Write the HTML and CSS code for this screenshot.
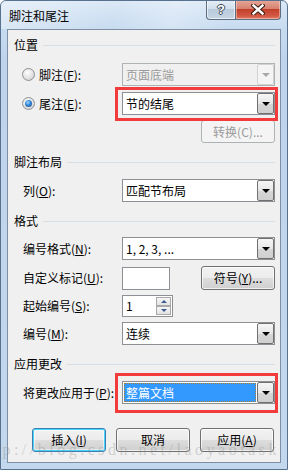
FILE: index.html
```html
<!DOCTYPE html>
<html>
<head>
<meta charset="utf-8">
<title>脚注和尾注</title>
<link rel="stylesheet" href="styles.css">
</head>
<body>
<div class="window">
  <div class="titlebar">
    <span class="title">脚注和尾注</span>
    <div class="caption">
      <div class="cap-btn help"><span>?</span></div>
      <div class="cap-btn close">
        <svg width="14" height="11" viewBox="0 0 14 11"><path d="M2.5 1.5 L11.5 9.5 M11.5 1.5 L2.5 9.5" stroke="#3b1a14" stroke-width="4.4" stroke-linecap="square" fill="none"/><path d="M2.5 1.5 L11.5 9.5 M11.5 1.5 L2.5 9.5" stroke="#ffffff" stroke-width="2.4" stroke-linecap="square" fill="none"/></svg>
      </div>
    </div>
  </div>
  <div class="client">
    <div class="group-head g1"><span>位置</span><i></i></div>
    <div class="row r-foot">
      <label class="lbl"><span class="radio"></span>脚注(<u>F</u>):</label>
      <div class="combo disabled"><span class="val">页面底端</span><span class="drop"><i></i></span></div>
    </div>
    <div class="row r-end">
      <label class="lbl"><span class="radio checked"></span>尾注(<u>E</u>):</label>
      <div class="combo-wrap">
        <div class="combo"><span class="val">节的结尾</span><span class="drop"><i></i></span></div>
        <span class="mark mark1"></span>
      </div>
    </div>
    <div class="row r-conv">
      <span></span>
      <div class="btn-line"><span class="btn disabled">转换(C)...</span></div>
    </div>

    <div class="group-head g2"><span>脚注布局</span><i></i></div>
    <div class="row r-col">
      <label class="lbl">列(<u>O</u>):</label>
      <div class="combo"><span class="val">匹配节布局</span><span class="drop"><i></i></span></div>
    </div>

    <div class="group-head g3"><span>格式</span><i></i></div>
    <div class="row r-fmt">
      <label class="lbl">编号格式(<u>N</u>):</label>
      <div class="combo"><span class="val">1, 2, 3, ...</span><span class="drop"><i></i></span></div>
    </div>
    <div class="row r-custom">
      <label class="lbl">自定义标记(<u>U</u>):</label>
      <div class="custom-line"><span class="textbox"></span><span class="btn">符号(<u>Y</u>)...</span></div>
    </div>
    <div class="row r-start">
      <label class="lbl">起始编号(<u>S</u>):</label>
      <div class="spin-line">
        <div class="spin"><span class="val">1</span><span class="spin-btns"><span class="sb up"><i></i></span><span class="sb down"><i></i></span></span></div>
      </div>
    </div>
    <div class="row r-num">
      <label class="lbl">编号(<u>M</u>):</label>
      <div class="combo"><span class="val">连续</span><span class="drop"><i></i></span></div>
    </div>

    <div class="group-head g4"><span>应用更改</span><i></i></div>
    <div class="row r-apply">
      <label class="lbl">将更改应用于(<u>P</u>):</label>
      <div class="combo-wrap">
        <div class="combo"><span class="val"><span class="sel">整篇文档</span></span><span class="drop"><i></i></span></div>
        <span class="mark mark2"></span>
      </div>
    </div>

    <div class="buttons">
      <span class="btn default">插入(<u>I</u>)</span>
      <span class="btn">取消</span>
      <span class="btn">应用(<u>A</u>)</span>
    </div>
  </div>
  <div class="watermark">http://blog.csdn.net/laoyaotask</div>
</div>
</body>
</html>
```

FILE: styles.css
```css
* { box-sizing: border-box; }
html, body { margin: 0; padding: 0; }
body {
  width: 288px;
  height: 470px;
  overflow: hidden;
  background: #ffffff;
  font-family: "Noto Sans CJK SC", "Noto Sans", sans-serif;
  font-size: 12px;
  color: #000000;
}
u { text-decoration: underline; text-underline-offset: 1px; }

.window {
  position: relative;
  width: 288px;
  height: 470px;
  border: 1px solid #56728f;
  border-radius: 6px 6px 0 0;
  background: linear-gradient(180deg, #dbe8f6 0px, #c7dbf0 28px, #bfd4ec 60px, #c3d7ed 100%);
  display: flex;
  flex-direction: column;
  overflow: hidden;
}

.titlebar {
  height: 28px;
  display: flex;
  justify-content: space-between;
  align-items: flex-start;
  padding-left: 8px;
  background: linear-gradient(100deg, rgba(255,255,255,0.35) 0%, rgba(255,255,255,0) 40%, rgba(255,255,255,0.25) 60%, rgba(255,255,255,0) 80%);
}
.title { margin-top: 8px; line-height: 14px; color: #000; }

.caption { display: flex; margin-right: 6px; margin-top: -1px; }
.cap-btn {
  height: 20px;
  display: flex;
  align-items: center;
  justify-content: center;
  border: 1px solid #5d6e82;
  border-top: none;
}
.help {
  width: 29px;
  border-radius: 0 0 0 4px;
  border-right: none;
  background: linear-gradient(180deg, #e6eef7 0%, #d2dfec 45%, #b9cadb 50%, #c7d6e4 100%);
  box-shadow: inset 0 0 0 1px rgba(255,255,255,0.6);
}
.help span {
  font-family: "Liberation Sans", sans-serif;
  font-weight: bold;
  font-size: 13px;
  color: #ffffff;
  line-height: 13px;
  text-shadow: 1px 0 0 #3a4656, -1px 0 0 #3a4656, 0 1px 0 #3a4656, 0 -1px 0 #3a4656;
}
.close {
  width: 46px;
  border-radius: 0 0 4px 0;
  background: linear-gradient(180deg, #e7a99c 0%, #d7826f 45%, #c2402b 50%, #d25a45 85%, #e2826a 100%);
  box-shadow: inset 0 0 0 1px rgba(255,220,210,0.5);
}

.client {
  flex: 1;
  margin: 0 6px 6px 6px;
  border: 1px solid #7f8fa3;
  background: #f0f0f0;
  display: flex;
  flex-direction: column;
  padding: 0 5px 0 0;
}

.group-head {
  display: flex;
  align-items: center;
  height: 14px;
  padding-left: 6px;
  line-height: 14px;
}
.group-head i {
  flex: 1;
  height: 1px;
  margin-left: 5px;
  background: #d5dfe5;
}
.g1 { margin-top: 8px; }
.g2 { margin-top: 12px; }
.g3 { margin-top: 12px; }
.g4 { margin-top: 12px; }

.row {
  display: grid;
  grid-template-columns: 100px 1fr;
  align-items: center;
  padding-left: 14px;
  height: 23px;
}
.r-foot { margin-top: 11px; }
.r-end { margin-top: 6px; }
.r-conv { margin-top: 5px; }
.r-col { margin-top: 10px; }
.r-fmt { margin-top: 9px; }
.r-custom { margin-top: 6px; }
.r-start { margin-top: 6px; height: 22px; }
.r-num { margin-top: 5px; }
.r-apply { margin-top: 10px; }

.lbl {
  display: flex;
  align-items: center;
  line-height: 14px;
  padding-left: 1px;
  white-space: nowrap;
}

.radio {
  width: 13px;
  height: 13px;
  border-radius: 50%;
  border: 1px solid #8e9196;
  background: radial-gradient(circle at 40% 35%, #ffffff 0%, #e4e4e4 50%, #c8c8c8 100%);
  margin-right: 4px;
  margin-left: -1px;
  position: relative;
  flex: none;
}
.radio.checked::after {
  content: "";
  position: absolute;
  left: 2px; top: 2px;
  width: 7px; height: 7px;
  border-radius: 50%;
  background: radial-gradient(circle at 40% 35%, #9fd4ff 0%, #3286d6 45%, #12407a 100%);
}

.combo-wrap { position: relative; height: 23px; }
.combo {
  display: flex;
  height: 23px;
  border: 1px solid #8c8f94;
  background: #ffffff;
}
.combo .val {
  flex: 1;
  display: flex;
  align-items: center;
  padding-left: 3px;
  line-height: 14px;
  white-space: nowrap;
}
.combo .drop {
  width: 17px;
  flex: none;
  display: flex;
  align-items: center;
  justify-content: center;
  border: 1px solid #707070;
  border-radius: 2px;
  background: linear-gradient(180deg, #f6f6f6 0%, #e7e7e7 50%, #d6d6d6 51%, #cfcfcf 100%);
}
.combo .drop i {
  width: 0; height: 0;
  border-left: 4px solid transparent;
  border-right: 4px solid transparent;
  border-top: 4px solid #000000;
  margin-top: 1px;
}
.combo.disabled {
  border-color: #adb2b5;
  background: #f0f0f0;
  color: #9a9a9a;
}
.combo.disabled .drop {
  border-color: #d2d2d2;
  background: #f4f4f4;
}
.combo.disabled .drop i { border-top-color: #a8a8a8; }

.sel {
  display: flex;
  align-items: center;
  height: 19px;
  flex: 1;
  margin-left: -2px;
  margin-right: 1px;
  padding-left: 2px;
  background: #3399ff;
  color: #ffffff;
  outline: 1px dotted #b07a30;
  outline-offset: -1px;
}

.mark {
  position: absolute;
  border: 3px solid #f23b3b;
}
.mark1 { left: -7px; right: -3px; top: -5px; bottom: -6px; }
.mark2 { left: -7px; right: -3px; top: -8px; bottom: -9px; }

.btn-line { display: flex; justify-content: flex-end; }
.custom-line { display: flex; justify-content: space-between; align-items: center; }
.spin-line { display: flex; }

.btn {
  width: 74px;
  height: 24px;
  display: flex;
  align-items: center;
  justify-content: center;
  border: 1px solid #707070;
  border-radius: 3px;
  background: linear-gradient(180deg, #f2f2f2 0%, #ebebeb 50%, #dddddd 51%, #cfcfcf 100%);
  box-shadow: inset 0 0 0 1px rgba(255,255,255,0.7);
  line-height: 14px;
  white-space: nowrap;
}
.btn.disabled {
  height: 23px;
  border-color: #adb2b5;
  background: #f4f4f4;
  color: #9a9a9a;
  box-shadow: none;
}
.btn.default {
  border-color: #3c7fb1;
  box-shadow: inset 0 0 0 1px #48d3fb, inset 0 0 0 2px rgba(255,255,255,0.5);
}

.textbox {
  width: 48px;
  height: 23px;
  border: 1px solid #8c8f94;
  background: #ffffff;
}

.spin {
  width: 51px;
  height: 22px;
  display: flex;
  border: 1px solid #8c8f94;
  background: #ffffff;
}
.spin .val {
  flex: 1;
  display: flex;
  align-items: center;
  padding-left: 3px;
  line-height: 14px;
}
.spin-btns {
  width: 16px;
  display: flex;
  flex-direction: column;
  padding: 1px 1px 1px 0;
  gap: 0;
}
.sb {
  flex: 1;
  display: flex;
  align-items: center;
  justify-content: center;
  border: 1px solid #a9a9a9;
  background: linear-gradient(180deg, #f6f6f6, #e2e2e2);
}
.sb i { width: 0; height: 0; border-left: 3px solid transparent; border-right: 3px solid transparent; }
.sb.up i { border-bottom: 3px solid #3d5c8f; }
.sb.down i { border-top: 3px solid #3d5c8f; }

.buttons {
  display: flex;
  gap: 10px;
  padding-left: 24px;
  margin-top: 24px;
}

.watermark {
  position: absolute;
  left: -26px;
  top: 440px;
  font-family: "Liberation Serif", serif;
  font-size: 16px;
  letter-spacing: 3.5px;
  color: rgba(140,140,140,0.35);
  white-space: nowrap;
  pointer-events: none;
}
```
